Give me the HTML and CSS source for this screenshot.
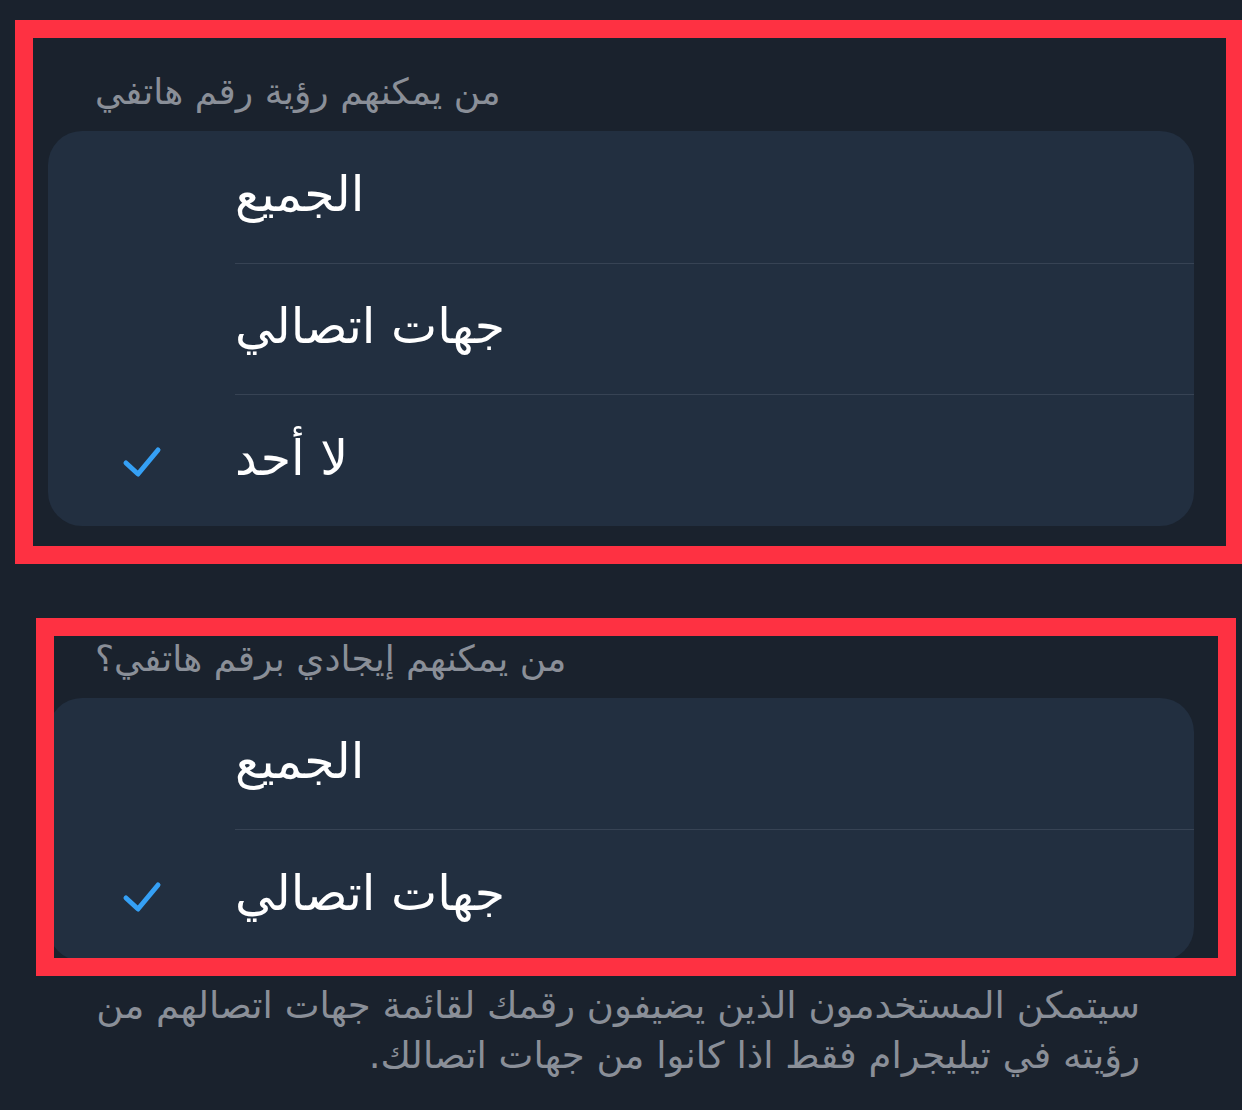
FILE: index.html
```html
<!DOCTYPE html>
<html lang="ar">
<head>
    <meta charset="UTF-8">
    <meta name="viewport" content="width=device-width, initial-scale=1.0">
    <title>Phone Number Privacy</title>
    <link rel="stylesheet" href="styles.css">
</head>
<body dir="ltr">
    <div class="screen">
        <div class="section first">
            <h2 class="sectiontitle" dir="rtl">من يمكنهم رؤية رقم هاتفي</h2>
            <div class="card">
                <div class="row">
                    <span class="check"></span>
                    <span class="label"><span dir="rtl">الجميع</span></span>
                </div>
                <div class="row">
                    <span class="check"></span>
                    <span class="label"><span dir="rtl">جهات اتصالي</span></span>
                </div>
                <div class="row">
                    <span class="check">
                        <svg width="40" height="32" viewBox="0 0 40 32"><path d="M4 17 L16 28 L36 4" fill="none" stroke="#35a0f5" stroke-width="5" stroke-linecap="round" stroke-linejoin="round"/></svg>
                    </span>
                    <span class="label"><span dir="rtl">لا أحد</span></span>
                </div>
            </div>
        </div>

        <div class="section second">
            <h2 class="sectiontitle" dir="rtl">من يمكنهم إيجادي برقم هاتفي؟</h2>
            <div class="card">
                <div class="row">
                    <span class="check"></span>
                    <span class="label"><span dir="rtl">الجميع</span></span>
                </div>
                <div class="row">
                    <span class="check">
                        <svg width="40" height="32" viewBox="0 0 40 32"><path d="M4 17 L16 28 L36 4" fill="none" stroke="#35a0f5" stroke-width="5" stroke-linecap="round" stroke-linejoin="round"/></svg>
                    </span>
                    <span class="label"><span dir="rtl">جهات اتصالي</span></span>
                </div>
            </div>
            <p class="footnote" dir="rtl">سيتمكن المستخدمون الذين يضيفون رقمك لقائمة جهات اتصالهم من<br>رؤيته في تيليجرام فقط اذا كانوا من جهات اتصالك.</p>
        </div>

        <!-- annotation frames drawn over the screenshot -->
        <div class="mark mark1"></div>
        <div class="mark mark2"></div>
    </div>
</body>
</html>
```

FILE: styles.css
```css
* {
    margin: 0;
    padding: 0;
    box-sizing: border-box;
}
body {
    background-color: #1a222d;
    font-family: "DejaVu Sans", sans-serif;
    overflow: hidden;
}
.screen {
    position: relative;
    width: 1242px;
    height: 1110px;
    padding: 70px 48px 0 48px;
}
.section.second {
    margin-top: 111px;
}
.sectiontitle {
    font-weight: normal;
    font-size: 36px;
    line-height: 44px;
    color: #8a8f98;
    padding-left: 47px;
    text-align: left;
    direction: ltr;
    margin-bottom: 17px;
}
.card {
    background-color: #222f40;
    border-radius: 34px;
    width: 1146px;
    overflow: hidden;
}
.row {
    display: flex;
    height: 131.5px;
}
.check {
    width: 187px;
    display: flex;
    align-items: center;
    justify-content: center;
    padding-top: 4px;
}
.label {
    flex: 1;
    display: flex;
    align-items: center;
    font-size: 49px;
    color: #ffffff;
    padding-bottom: 4px;
}
.row + .row .label {
    border-top: 1.5px solid #374354;
}
.footnote {
    margin-top: 20px;
    width: 1092px;
    font-size: 37px;
    line-height: 50px;
    color: #8a8f98;
    text-align: right;
}
.mark {
    position: absolute;
    border: 18px solid #fe3142;
}
.mark1 {
    left: 15px;
    top: 20px;
    width: 1229px;
    height: 544px;
}
.mark2 {
    left: 36px;
    top: 618px;
    width: 1200px;
    height: 358px;
}
```
